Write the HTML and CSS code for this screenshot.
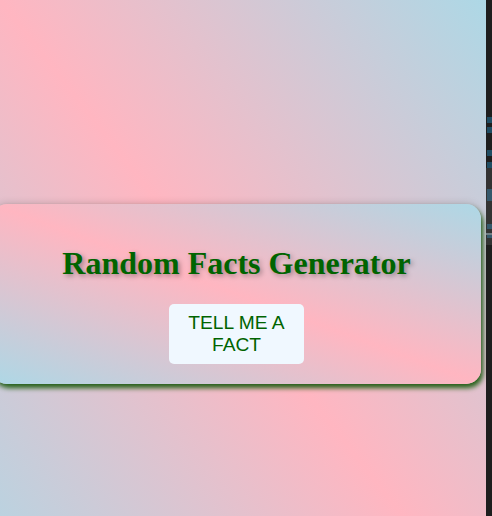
FILE: index.html
```html
<!DOCTYPE html>
<html lang="en">
<head>
<meta charset="UTF-8">
<title>Random Facts Generator</title>
<link rel="stylesheet" href="styles.css">
</head>
<body>
  <main class="page">
    <section class="card">
      <h1 class="title">Random Facts Generator</h1>
      <button class="fact-btn" type="button">TELL ME A FACT</button>
    </section>
  </main>
  <aside class="side-strip" aria-hidden="true">
    <span class="mark mark-a"></span>
    <span class="mark mark-b"></span>
    <span class="mark mark-c"></span>
    <span class="mark mark-d"></span>
    <div class="thumb">
      <span class="thumb-block thumb-1"></span>
      <span class="thumb-block thumb-2"></span>
      <span class="thumb-line"></span>
      <span class="thumb-block thumb-3"></span>
    </div>
  </aside>
</body>
</html>
```

FILE: styles.css
```css
html, body {
  margin: 0;
  padding: 0;
  height: 516px;
  overflow: hidden;
}

body {
  display: flex;
  width: 492px;
  background: #1e1e1e;
}

.page {
  flex: 0 0 486px;
  height: 516px;
  overflow: hidden;
  padding-top: 204px;
  box-sizing: border-box;
  background-image: linear-gradient(to top right, #add8e6, #ffb6c1, #add8e6);
  background-size: 100% 623px;
  background-repeat: no-repeat;
  background-color: #add8e6;
}

.card {
  width: 489px;
  margin-left: -8px;
  box-sizing: border-box;
  padding: 20px;
  border-radius: 15px;
  background: linear-gradient(to top right, #add8e6, #ffb6c1, #add8e6);
  box-shadow: 0 0 8px rgba(0, 0, 0, 0.18), 2px 4px 5px #2b6a1e;
  display: flex;
  flex-direction: column;
  align-items: center;
}

.title {
  margin: 21.44px 0;
  font-family: "Liberation Serif", "Times New Roman", serif;
  font-size: 32px;
  font-weight: bold;
  color: #006400;
  text-shadow: 2px 2px 5px rgba(0, 0, 0, 0.35);
  text-align: center;
}

.fact-btn {
  width: 135px;
  padding: 8px 16px;
  border: none;
  border-radius: 5px;
  background: #f0f8ff;
  color: #006400;
  font-family: "Liberation Sans", Arial, sans-serif;
  font-size: 19.2px;
  line-height: normal;
  text-align: center;
  cursor: pointer;
}

.side-strip {
  flex: 0 0 6px;
  height: 516px;
  background: #1e1e1e;
  display: flex;
  flex-direction: column;
  padding-top: 117px;
  box-sizing: border-box;
}

.mark {
  display: block;
  width: 5px;
  height: 6px;
  margin-left: 1px;
  background: #1f4d63;
}

.mark-b { margin-top: 4px; }
.mark-c { margin-top: 17px; }
.mark-d { margin-top: 6px; }

.thumb {
  height: 77px;
  background: #333333;
  display: flex;
  flex-direction: column;
  padding-top: 21px;
  box-sizing: border-box;
}

.thumb-block {
  display: block;
  width: 5px;
  margin-left: 1px;
  background: #34586b;
}

.thumb-1 { height: 12px; }
.thumb-2 { height: 5px; margin-top: 23px; }
.thumb-line {
  display: block;
  height: 2px;
  margin-top: 4px;
  background: #6f7d84;
}
.thumb-3 { height: 3px; }
```
